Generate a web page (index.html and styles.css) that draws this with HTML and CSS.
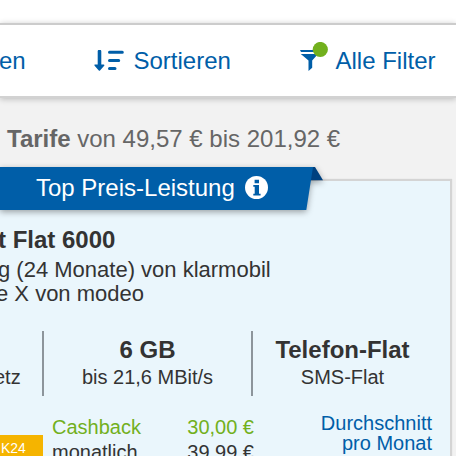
FILE: index.html
```html
<!DOCTYPE html>
<html lang="de">
<head>
<meta charset="utf-8">
<title>Tarife</title>
<link rel="stylesheet" href="styles.css">
</head>
<body>
<div class="top"></div>
<nav class="toolbar">
  <a class="tool tool-cut">en</a>
  <a class="tool tool-sort">
    <svg class="sort-icon" width="30" height="22" viewBox="0 0 30 22"><path d="M5.5 1.5V16" stroke="#005ea8" stroke-width="3.6" stroke-linecap="round"/><path d="M1.2 15.2H9.6L5.4 20Z" fill="#005ea8" stroke="#005ea8" stroke-width="1.6" stroke-linejoin="round"/><path d="M15.5 2.2H28.3M15.5 10.5H24.7M15.5 18.5H21" stroke="#005ea8" stroke-width="3" stroke-linecap="round"/></svg>
    Sortieren
  </a>
  <a class="tool tool-filter">
    <svg class="filter-icon" width="28" height="30" viewBox="0 0 28 30"><path d="M0 8H17V10H1ZM.8 12H18L12.2 18.6V25.7L8.5 29V18.6Z" fill="#005ea8"/><circle cx="20.3" cy="7.5" r="7.6" fill="#72b01d"/></svg>
    Alle Filter
  </a>
</nav>
<main>
  <p class="summary"><b>Tarife</b> von 49,57 € bis 201,92 €</p>
  <article class="card">
    <div class="ribbon">
      <svg class="ribbon-shape" width="324" height="44" viewBox="0 0 324 44"><path d="M312 0H315L323 13.3H309Z" fill="#00417f"/><path d="M0 0H313L306.3 43H0Z" fill="#005ea8"/></svg>
      <span class="ribbon-text">Top Preis-Leistung</span>
      <svg class="info" width="24" height="24" viewBox="0 0 24 24"><circle cx="11.5" cy="11.5" r="11.5" fill="#fff"/><path d="M9.6 3.8H14V7.2H9.6ZM8.3 8.9H14V17.8H15.6V19.5H8.3V17.8H9.7V10.7H8.3Z" fill="#005ea8"/></svg>
    </div>
    <h2 class="title">t Flat 6000</h2>
    <p class="line">g (24 Monate) von klarmobil</p>
    <p class="line line-device">e X von modeo</p>
    <div class="features">
      <div class="feature net"><span>etz</span></div>
      <div class="feature data"><b>6 GB</b><span>bis 21,6 MBit/s</span></div>
      <div class="feature phone"><b>Telefon-Flat</b><span>SMS-Flat</span></div>
    </div>
    <div class="pricing">
      <div class="badge">K24</div>
      <dl class="costs">
        <dt class="green">Cashback</dt><dd class="green">30,00 €</dd>
        <dt>monatlich</dt><dd>39,99 €</dd>
      </dl>
      <div class="average">Durchschnitt<br>pro Monat</div>
    </div>
  </article>
</main>
</body>
</html>
```
FILE: styles.css
```css
* { box-sizing: border-box; }
body {
  margin: 0;
  height: 456px;
  overflow: hidden;
  background: #f2f2f2;
  color: #333;
  font-family: "Liberation Sans", Arial, sans-serif;
  font-size: 20px;
}
p, h2, dl, dd { margin: 0; }
svg { display: block; flex: none; fill: none; }
.top { height: 23px; background: #fff; }
.toolbar {
  display: flex;
  position: relative;
  height: 75px;
  padding-top: 22px;
  background: #fff;
  border-top: 2px solid #ccc;
  border-bottom: 2px solid #d2d2d2;
  box-shadow: 0 1px 6px rgba(0, 0, 0, .24);
  color: #005ea8;
  font-size: 24px;
  line-height: 28px;
  white-space: nowrap;
}
.tool { display: flex; }
.tool-cut { width: 94px; text-indent: -1px; }
.tool-sort { width: 206px; gap: 9.5px; }
.tool-filter { gap: 7.5px; }
.sort-icon { margin-top: 3px; }
.filter-icon { margin-top: -5px; }
.summary {
  height: 83px;
  padding: 27px 0 0 7px;
  color: #666;
  font-size: 24px;
  line-height: 28px;
  white-space: nowrap;
}
.card {
  width: 450px;
  height: 275px;
  background: #eaf6fc;
  box-shadow: 0 0 1px 2px rgba(0, 0, 0, .12);
}
.ribbon {
  display: flex;
  position: relative;
  top: -14px;
  height: 43px;
  padding: 7px 0 0 36px;
  color: #fff;
  font-size: 24px;
  line-height: 28px;
}
.ribbon-shape {
  position: absolute;
  top: 0;
  left: 0;
  overflow: visible;
  filter: drop-shadow(0 2px 3px rgba(0, 0, 0, .35));
}
.ribbon-text { position: relative; width: 209px; white-space: nowrap; }
.info { position: relative; margin-top: 2px; }
.title { margin-top: 2px; font-size: 24px; line-height: 28px; text-indent: -2px; }
.line { font-size: 22px; line-height: 24px; white-space: nowrap; text-indent: -2px; }
.line-device { text-indent: -4px; }
.title + .line { margin-top: 4px; }
.features { display: flex; height: 65px; margin-top: 25px; }
.feature {
  display: flex;
  flex-direction: column;
  padding-top: 5px;
  border-right: 2px solid #8d959b;
  text-align: center;
  line-height: 24px;
}
.feature b { margin-bottom: 1px; font-size: 24px; line-height: 28px; }
.net { width: 44px; padding-top: 34px; text-align: left; text-indent: -6px; }
.data { width: 209px; }
.phone { width: 179px; border: 0; }
.pricing { display: flex; height: 41px; margin-top: 19px; overflow: hidden; line-height: 25px; }
.badge {
  width: 43px;
  height: 40px;
  margin-top: 20px;
  padding: 1px 0 0 1px;
  background: #f5b400;
  color: #fff;
  font-size: 14px;
}
.costs {
  display: grid;
  grid-template-columns: 110px 92px;
  align-content: start;
  margin-left: 9px;
}
.costs dd { text-align: right; }
.green { color: #72b01d; }
.average {
  flex: 1;
  margin: -2px 18px 0 0;
  color: #005ea8;
  line-height: 20px;
  text-align: right;
}
```
